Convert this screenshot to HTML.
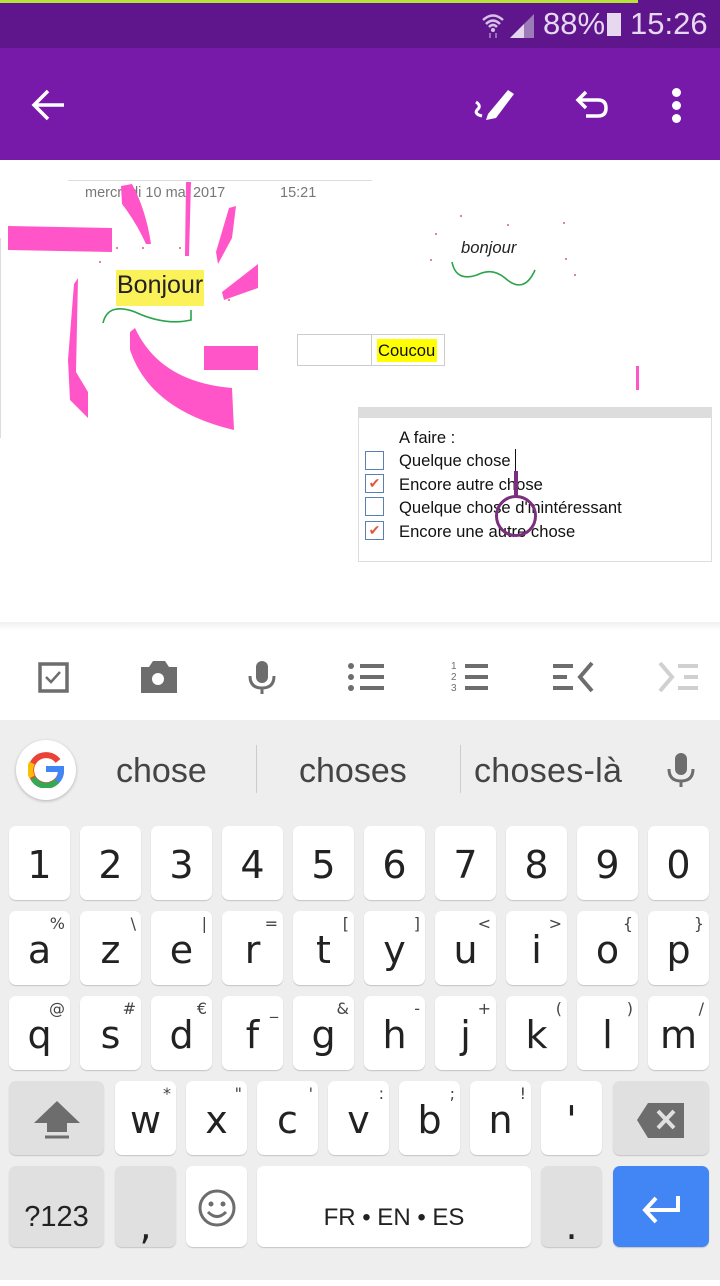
<!DOCTYPE html>
<html><head><meta charset="utf-8"><style>
*{margin:0;padding:0;box-sizing:border-box}
body{width:720px;height:1280px;position:relative;overflow:hidden;background:#fff;font-family:"Liberation Sans",sans-serif}
.a{position:absolute}
.k{position:absolute;width:61px;height:74px;background:#fff;border-radius:7px;box-shadow:0 1px 1px rgba(0,0,0,.18);font-family:"DejaVu Sans","Liberation Sans",sans-serif;font-size:38px;color:#222;text-align:center;line-height:78px}
.k sup{position:absolute;right:5px;top:-26px;font-size:16px;color:#444}
.g{background:#e0e0e0}
.c{font-family:"Liberation Sans","DejaVu Sans",sans-serif;font-size:16.6px;color:#111}
.t{font-family:"Liberation Sans",sans-serif}
</style></head><body>
<div class="a" style="left:0;top:0;width:720px;height:48px;background:#5f168d"></div>
<div class="a" style="left:0;top:0;width:638px;height:3px;background:#b6e23a"></div>
<svg class="a" style="left:480px;top:12px" width="26" height="26" viewBox="0 0 26 26"><path d="M3 8 Q13 -1 23 8" stroke="#d7c2e6" stroke-width="2.5" fill="none"/><path d="M6 12 Q13 5 20 12" stroke="#d7c2e6" stroke-width="2.5" fill="none"/><path d="M9 15 Q13 11 17 15" stroke="#d7c2e6" stroke-width="2.5" fill="none"/><circle cx="13" cy="18" r="2" fill="#d7c2e6"/><path d="M10 21v5M16 21v5" stroke="#a98cc0" stroke-width="1.5"/></svg>
<svg class="a" style="left:510px;top:12px" width="26" height="26"><path d="M0 26 L24 2 L24 26Z" fill="#9d7ab8"/><path d="M0 26 L14 12 L14 26Z" fill="#e4d6ee"/></svg>
<div class="a" style="left:543px;top:6px;font-size:31px;color:#e6d9ef">88%</div>
<div class="a" style="left:607px;top:13px;width:14px;height:23px;background:#e6d9ef"></div>
<div class="a" style="left:630px;top:6px;font-size:31px;color:#e6d9ef">15:26</div>
<div class="a" style="left:0;top:48px;width:720px;height:112px;background:#771aaa"></div>
<svg class="a" style="left:30px;top:88px" width="36" height="34"><path d="M4 17H34M18 3L4 17L18 31" stroke="#fff" stroke-width="3.5" fill="none"/></svg>
<svg class="a" style="left:470px;top:84px" width="54" height="40"><path d="M18 30 L38 6 L44 10 L26 34 L16 36Z" fill="#fff"/><path d="M6 18 Q12 22 7 26 Q4 30 12 32" stroke="#fff" stroke-width="3" fill="none"/></svg>
<svg class="a" style="left:574px;top:86px" width="38" height="36"><path d="M12 6L4 14L12 22" stroke="#fff" stroke-width="3.5" fill="none"/><path d="M5 14H24Q32 14 32 22Q32 30 24 30H12" stroke="#fff" stroke-width="3.5" fill="none"/></svg>
<div class="a" style="left:672px;top:88px;width:9px;height:9px;border-radius:50%;background:#fff"></div>
<div class="a" style="left:672px;top:101px;width:9px;height:9px;border-radius:50%;background:#fff"></div>
<div class="a" style="left:672px;top:114px;width:9px;height:9px;border-radius:50%;background:#fff"></div>
<div class="a" style="left:68px;top:180px;width:304px;height:1px;background:#ddd"></div>
<div class="a c" style="left:85px;top:185px;color:#777;font-size:14.5px">mercredi 10 mai 2017</div>
<div class="a c" style="left:280px;top:185px;color:#777;font-size:14.5px">15:21</div>
<svg class="a" style="left:0;top:160px" width="720" height="460">
<g fill="#ff55c8">
<path d="M8 66 L112 68 L112 92 L8 90Z"/>
<path d="M121 26 L132 24 Q146 50 151 84 L146 84 Q136 62 122 44Z"/>
<path d="M186 22 L191 22 L189 96 L185 96Z"/>
<path d="M229 48 L236 46 L232 78 L218 104 L216 92Z"/>
<path d="M222 132 L258 104 L258 128 L224 140Z"/>
<path d="M74 124 L78 118 L76 212 L88 232 L88 258 L70 240 L68 200Z"/>
<path d="M130 172 L135 168 Q160 222 232 228 L234 270 Q150 250 130 190Z"/>
<path d="M204 186 L258 186 L258 210 L204 210Z"/>
<path d="M636 206 L639 206 L639 230 L636 230Z"/>
</g>
<path d="M103 163 Q108 142 135 152 Q165 166 191 160 L191 150" stroke="#2aa44a" stroke-width="1.6" fill="none"/>
<path d="M452 102 Q456 122 477 115 Q492 107 505 118 Q524 135 535 110" stroke="#2aa44a" stroke-width="1.6" fill="none"/>
<g fill="#e06060"><circle cx="117" cy="88" r="1"/><circle cx="143" cy="88" r="1"/><circle cx="180" cy="88" r="1"/><circle cx="100" cy="102" r="1"/><circle cx="229" cy="140" r="1"/><circle cx="461" cy="56" r="1"/><circle cx="508" cy="65" r="1"/><circle cx="564" cy="63" r="1"/><circle cx="436" cy="74" r="1"/><circle cx="431" cy="100" r="1"/><circle cx="566" cy="99" r="1"/><circle cx="575" cy="115" r="1"/></g>
</svg>
<div class="a" style="left:0;top:238px;width:1px;height:200px;background:#ddd"></div>
<div class="a" style="left:116px;top:270px;width:88px;height:36px;background:#fbf25a"></div>
<div class="a c" style="left:117px;top:271px;font-size:25px;color:#222">Bonjour</div>
<div class="a c" style="left:461px;top:238px;font-style:italic;color:#222">bonjour</div>
<div class="a" style="left:297px;top:334px;width:148px;height:32px;border:1px solid #ccc"></div>
<div class="a" style="left:371px;top:334px;width:1px;height:32px;background:#ccc"></div>
<div class="a" style="left:377px;top:339px;width:60px;height:23px;background:#ffff00"></div>
<div class="a c" style="left:378px;top:341px">Coucou</div>
<div class="a" style="left:358px;top:407px;width:354px;height:11px;background:#ddd"></div>
<div class="a" style="left:358px;top:418px;width:354px;height:144px;border:1px solid #ddd;border-top:0"></div>
<div class="a c" style="left:399px;top:428px">A faire :</div>
<div class="a c" style="left:399px;top:451px">Quelque chose</div>
<div class="a c" style="left:399px;top:475px">Encore autre chose</div>
<div class="a c" style="left:399px;top:498px">Quelque chose d'inintéressant</div>
<div class="a c" style="left:399px;top:522px">Encore une autre chose</div>
<div class="a" style="left:365px;top:451px;width:19px;height:19px;border:1.5px solid #5a7fb4"></div>
<div class="a" style="left:365px;top:474px;width:19px;height:19px;border:1.5px solid #5a7fb4;color:#e05a3a;font-size:14px;text-align:center;line-height:17px">✔</div>
<div class="a" style="left:365px;top:497px;width:19px;height:19px;border:1.5px solid #5a7fb4"></div>
<div class="a" style="left:365px;top:521px;width:19px;height:19px;border:1.5px solid #5a7fb4;color:#e05a3a;font-size:14px;text-align:center;line-height:17px">✔</div>
<div class="a" style="left:515px;top:449px;width:1px;height:22px;background:#111"></div>
<div class="a" style="left:514px;top:471px;width:4px;height:26px;background:#7b2f7e"></div>
<div class="a" style="left:495px;top:495px;width:42px;height:42px;border:3.5px solid #7b2f7e;border-radius:50%"></div>
<div class="a" style="left:0;top:622px;width:720px;height:8px;background:linear-gradient(#f0f0f0,#fff)"></div>
<svg class="a" style="left:0;top:650px" width="720" height="56">
<g fill="#6d6d6d" stroke="#6d6d6d">
<rect x="40" y="14" width="27" height="27" fill="none" stroke-width="3.5"/><path d="M46 27l5 5 9-10" fill="none" stroke-width="2.5"/>
<path d="M141 17h8l4-6h12l4 6h8v26h-36z" stroke="none"/><circle cx="158" cy="29" r="6" fill="#fff" stroke="none"/>
<rect x="256" y="11" width="12" height="22" rx="6" stroke="none"/><path d="M250 26q0 12 12 12q12 0 12-12M262 38v6" fill="none" stroke-width="3"/>
<circle cx="351" cy="16" r="3" stroke="none"/><circle cx="351" cy="27" r="3" stroke="none"/><circle cx="351" cy="38" r="3" stroke="none"/><path d="M360 16h24M360 27h24M360 38h24" stroke-width="4"/>
<path d="M465 16h23M465 27h23M465 38h23" stroke-width="4"/>
<path d="M553 16h20M553 27h14M553 38h20M592 13l-12 14 12 14" fill="none" stroke-width="4"/>
</g>
<text x="451" y="19" font-size="10" fill="#6d6d6d" font-family="Liberation Sans">1</text><text x="451" y="30" font-size="10" fill="#6d6d6d" font-family="Liberation Sans">2</text><text x="451" y="41" font-size="10" fill="#6d6d6d" font-family="Liberation Sans">3</text>
<path d="M678 16h20M684 27h14M678 38h20M660 13l12 14-12 14" fill="none" stroke="#d0d0d0" stroke-width="4"/>
</svg>
<div class="a" style="left:0;top:720px;width:720px;height:560px;background:#eeeeee"></div>
<div class="a" style="left:16px;top:740px;width:60px;height:60px;border-radius:50%;background:#fff;box-shadow:0 1px 3px rgba(0,0,0,.25)"></div>
<svg class="a" style="left:28px;top:752px" width="36" height="36" viewBox="0 0 36 36"><path d="M30 9A15 15 0 1 0 33 20" stroke="#ea4335" stroke-width="6" fill="none"/><path d="M4 11A15 15 0 0 0 4 25" stroke="#fbbc05" stroke-width="6" fill="none"/><path d="M5 26A15 15 0 0 0 29 29" stroke="#34a853" stroke-width="6" fill="none"/><path d="M18 17h15v3A15 15 0 0 1 29 29" stroke="#4285f4" stroke-width="6" fill="none"/></svg>
<div class="a" style="left:116px;top:752px;font-size:34px;color:#444">chose</div>
<div class="a" style="left:256px;top:745px;width:1px;height:48px;background:#ccc"></div>
<div class="a" style="left:299px;top:752px;font-size:34px;color:#444">choses</div>
<div class="a" style="left:460px;top:745px;width:1px;height:48px;background:#ccc"></div>
<div class="a" style="left:474px;top:752px;font-size:34px;color:#444;letter-spacing:.3px">choses-là</div>
<svg class="a" style="left:664px;top:752px" width="34" height="36"><rect x="11" y="1" width="12" height="22" rx="6" fill="#6d6d6d"/><path d="M5 17q0 12 12 12q12 0 12-12M17 29v6" stroke="#6d6d6d" stroke-width="3" fill="none"/></svg>

<div class="k" style="left:9px;top:826px">1</div><div class="k" style="left:80px;top:826px">2</div><div class="k" style="left:151px;top:826px">3</div><div class="k" style="left:222px;top:826px">4</div><div class="k" style="left:293px;top:826px">5</div><div class="k" style="left:364px;top:826px">6</div><div class="k" style="left:435px;top:826px">7</div><div class="k" style="left:506px;top:826px">8</div><div class="k" style="left:577px;top:826px">9</div><div class="k" style="left:648px;top:826px">0</div>

<div class="k" style="left:9px;top:911px">a<sup>%</sup></div><div class="k" style="left:80px;top:911px">z<sup>\</sup></div><div class="k" style="left:151px;top:911px">e<sup>|</sup></div><div class="k" style="left:222px;top:911px">r<sup>=</sup></div><div class="k" style="left:293px;top:911px">t<sup>[</sup></div><div class="k" style="left:364px;top:911px">y<sup>]</sup></div><div class="k" style="left:435px;top:911px">u<sup>&lt;</sup></div><div class="k" style="left:506px;top:911px">i<sup>&gt;</sup></div><div class="k" style="left:577px;top:911px">o<sup>{</sup></div><div class="k" style="left:648px;top:911px">p<sup>}</sup></div>

<div class="k" style="left:9px;top:996px">q<sup>@</sup></div><div class="k" style="left:80px;top:996px">s<sup>#</sup></div><div class="k" style="left:151px;top:996px">d<sup>€</sup></div><div class="k" style="left:222px;top:996px">f<sup>_</sup></div><div class="k" style="left:293px;top:996px">g<sup>&amp;</sup></div><div class="k" style="left:364px;top:996px">h<sup>-</sup></div><div class="k" style="left:435px;top:996px">j<sup>+</sup></div><div class="k" style="left:506px;top:996px">k<sup>(</sup></div><div class="k" style="left:577px;top:996px">l<sup>)</sup></div><div class="k" style="left:648px;top:996px">m<sup>/</sup></div>

<div class="k g" style="left:9px;top:1081px;width:95px"><svg style="margin-top:18px" width="50" height="40"><path d="M25 2L2 24h13v9h20v-9h13z" fill="#6d6d6d"/><path d="M13 38h24" stroke="#6d6d6d" stroke-width="3"/></svg></div>
<div class="k" style="left:115px;top:1081px">w<sup>*</sup></div><div class="k" style="left:186px;top:1081px">x<sup>"</sup></div><div class="k" style="left:257px;top:1081px">c<sup>'</sup></div><div class="k" style="left:328px;top:1081px">v<sup>:</sup></div><div class="k" style="left:399px;top:1081px">b<sup>;</sup></div><div class="k" style="left:470px;top:1081px">n<sup>!</sup></div><div class="k" style="left:541px;top:1081px">'</div>
<div class="k g" style="left:613px;top:1081px;width:96px"><svg style="margin-top:20px" width="50" height="38"><path d="M12 2h36v35H12L1 19z" fill="#6d6d6d"/><path d="M22 10l16 17M38 10L22 27" stroke="#e0e0e0" stroke-width="4"/></svg></div>

<div class="k g t" style="left:9px;top:1166px;width:95px;height:81px;font-size:29px;line-height:102px;font-family:'Liberation Sans',sans-serif">?123</div>
<div class="k g" style="left:115px;top:1166px;height:81px;line-height:120px">,</div>
<div class="k" style="left:186px;top:1166px;height:81px"><svg style="margin-top:22px" width="40" height="40"><circle cx="20" cy="20" r="17" stroke="#6d6d6d" stroke-width="3" fill="none"/><circle cx="14" cy="16" r="2.5" fill="#6d6d6d"/><circle cx="26" cy="16" r="2.5" fill="#6d6d6d"/><path d="M11 24q9 9 18 0" stroke="#6d6d6d" stroke-width="3" fill="none"/></svg></div>
<div class="k" style="left:257px;top:1166px;width:274px;height:81px;font-size:24px;line-height:104px;font-family:'Liberation Sans',sans-serif">FR • EN • ES</div>
<div class="k g" style="left:541px;top:1166px;height:81px;line-height:120px">.</div>
<div class="k" style="left:613px;top:1166px;width:96px;height:81px;background:#4285f4"><svg style="margin-top:26px" width="42" height="32"><path d="M38 4v14H6M16 6L5 18l11 12" stroke="#fff" stroke-width="4" fill="none"/></svg></div>
</body></html>
